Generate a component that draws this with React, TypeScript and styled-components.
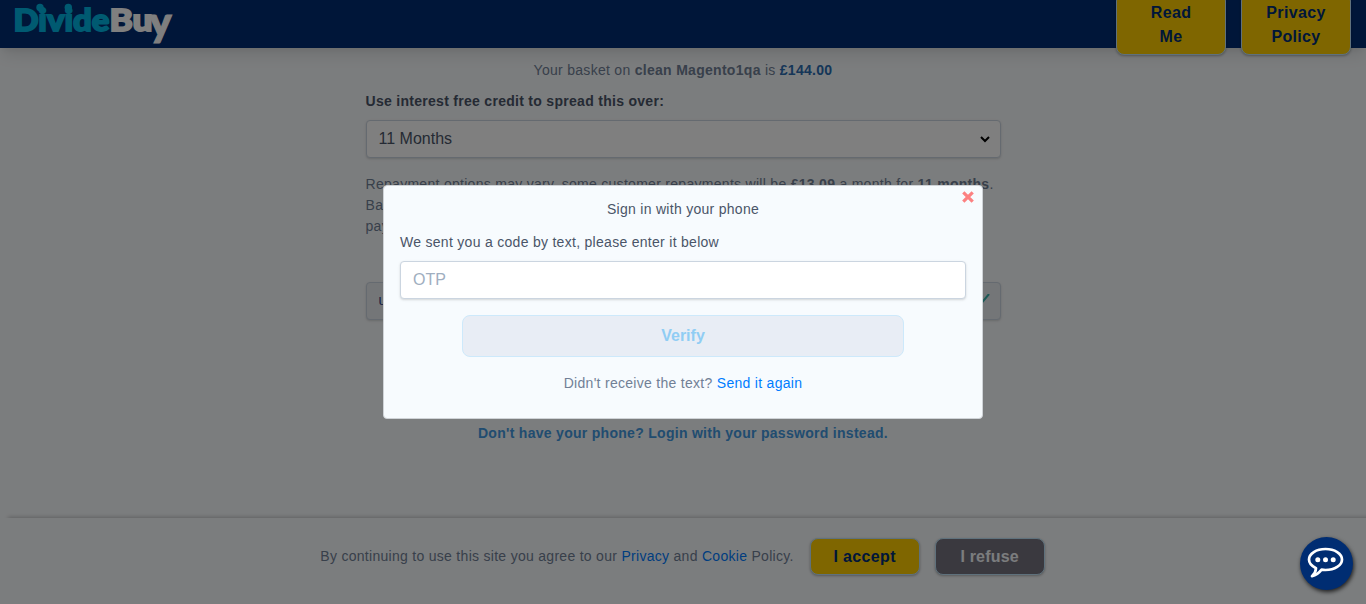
import React from "react";
import styled, { createGlobalStyle } from "styled-components";

const GlobalStyle = createGlobalStyle`
  *, *::before, *::after { box-sizing: border-box; }
  html, body { margin: 0; height: 100%; overflow: hidden; }
  body {
    background: #f7fafc;
    color: #718096;
    font-family: "Liberation Sans", Arial, sans-serif;
    font-size: 14px;
    line-height: 21px;
    letter-spacing: 0.29px;
  }
  p { margin: 0; }
`;

const Page = styled.div`
  display: flex;
  flex-direction: column;
  height: 604px;
  overflow: hidden;
`;

const NavBar = styled.header`
  display: flex;
  flex: none;
  align-items: center;
  justify-content: space-between;
  height: 48px;
  padding: 0 15px;
  background: #002d72;
  box-shadow: 0 10px 15px -3px rgba(0, 0, 0, 0.1), 0 4px 6px -2px rgba(0, 0, 0, 0.05);
`;

const Logo = styled.svg`
  display: block;
  width: 160px;
  height: 48px;
  overflow: visible;
  letter-spacing: 0;
  font-family: Lato, sans-serif;
  font-weight: 900;
`;

const NavActions = styled.div`
  display: flex;
  gap: 15px;
`;

const Button = styled.button<{ $tone: "gold" | "slate"; $tall?: boolean }>`
  width: 110px;
  height: ${(p) => (p.$tall ? 62 : 37)}px;
  padding: ${(p) => (p.$tall ? "1px 20px 0" : "0 20px")};
  border: 1px solid #bee3f8;
  border-radius: 8px;
  background: ${(p) => (p.$tone === "gold" ? "#ffcd00" : "#75727f")};
  color: ${(p) => (p.$tone === "gold" ? "#002d72" : "#f7fafc")};
  font: bold 16px/24px "Liberation Sans", Arial, sans-serif;
  letter-spacing: ${(p) => (p.$tone === "gold" ? 0.35 : 0.2)}px;
  box-shadow: 0 1px 3px rgba(0, 0, 0, 0.2), 0 1px 2px rgba(0, 0, 0, 0.1);
`;

const Content = styled.main`
  display: flex;
  flex: 1;
  flex-direction: column;
  width: 635px;
  margin: 0 auto;
  padding-top: 12px;
`;

const Basket = styled.p`
  text-align: center;
`;

const Strong = styled.strong<{ $color?: string }>`
  color: ${(p) => p.$color ?? "inherit"};
`;

const Label = styled.label`
  margin-top: 10px;
  color: #4a5568;
  font-weight: bold;
`;

const Field = styled.div<{ $muted?: boolean }>`
  display: flex;
  align-items: center;
  justify-content: space-between;
  height: 38px;
  padding: 0 10px 1px 12px;
  border: 1px solid #cbd5e0;
  border-radius: 4px;
  background: ${(p) => (p.$muted ? "#e8ecf1" : "#fff")};
  color: ${(p) => (p.$muted ? "#2a4386" : "#4a5568")};
  font-size: ${(p) => (p.$muted ? 14 : 16)}px;
  letter-spacing: 0;
  box-shadow: 0 1px 3px rgba(0, 0, 0, 0.1), 0 1px 2px rgba(0, 0, 0, 0.06);
`;

const SelectField = styled(Field)`
  margin-top: 8px;
`;

const Terms = styled.p`
  height: 63px;
  margin-top: 16px;
  white-space: nowrap;
`;

const UserField = styled(Field)`
  margin-top: 45px;
`;

const LoginLink = styled.a`
  margin-top: 103px;
  color: #4299e1;
  font-weight: bold;
  text-align: center;
`;

const CookieBar = styled.footer`
  display: flex;
  flex: none;
  align-items: center;
  justify-content: center;
  height: 86px;
  padding: 0 1px 9px 0;
  background: #f7fafc;
  box-shadow: 8px -1px 4px rgba(0, 0, 0, 0.22);
`;

const CookieText = styled.p`
  margin-right: 16px;
`;

const CookieButtons = styled.div`
  display: flex;
  gap: 15px;
`;

const Link = styled.a`
  color: #007bff;
`;

const Backdrop = styled.div`
  position: fixed;
  inset: 0;
  display: flex;
  align-items: center;
  justify-content: center;
  background: rgba(0, 0, 0, 0.5);
`;

const Dialog = styled.section`
  position: relative;
  display: flex;
  flex-direction: column;
  width: 600px;
  height: 234px;
  padding: 13px 16px;
  border: 1px solid #cfd3d7;
  border-radius: 4px;
  background: #f7fbfe;
  color: #4a5568;
`;

const Close = styled.svg`
  position: absolute;
  top: 5px;
  right: 8px;
  width: 12px;
  height: 12px;
`;

const Title = styled.p`
  text-align: center;
`;

const Prompt = styled.p`
  margin-top: 12px;
`;

const OtpInput = styled.input`
  height: 38px;
  margin-top: 8px;
  padding: 0 12px;
  border: 1px solid #cbd5e0;
  border-radius: 4px;
  background: #fff;
  font: 16px "Liberation Sans", Arial, sans-serif;
  box-shadow: 0 1px 3px rgba(0, 0, 0, 0.1), 0 1px 2px rgba(0, 0, 0, 0.06);
  &::placeholder { color: #a0aec0; opacity: 1; }
`;

const Verify = styled.button`
  align-self: center;
  width: 442px;
  height: 42px;
  margin-top: 16px;
  border: 1px solid #cde9fb;
  border-radius: 8px;
  background: #e8edf5;
  color: #90cdf4;
  font: bold 16px "Liberation Sans", Arial, sans-serif;
`;

const Resend = styled.p`
  margin-top: 16px;
  color: #718096;
  text-align: center;
`;

const Chat = styled.button`
  position: fixed;
  right: 13px;
  bottom: 14px;
  display: flex;
  align-items: center;
  justify-content: center;
  width: 53px;
  height: 53px;
  padding: 0 2px 2px 0;
  border: 0;
  border-radius: 50%;
  background: #002d72;
  box-shadow: 1px 2px 4px rgba(0, 0, 0, 0.75);
`;

export default function App() {
  return (
    <>
      <GlobalStyle />
      <Page>
        <NavBar>
          <Logo viewBox="0 0 160 48" aria-label="DivideBuy">
            <text x="-1.500" y="31" fontSize="31" fill="#00b5e2" stroke="#00b5e2" strokeWidth="1.800" textLength="96" lengthAdjust="spacingAndGlyphs">Divide</text>
            <circle cx="25" cy="7.500" r="3.700" fill="#00b5e2" />
            <circle cx="53.300" cy="7.500" r="3.700" fill="#00b5e2" />
            <text x="94.500" y="31" fontSize="31" fill="#fff" stroke="#fff" strokeWidth="1.800" textLength="43" lengthAdjust="spacingAndGlyphs">Bu</text>
            <text x="134.500" y="35.500" fontSize="40" fill="#fff" stroke="#fff" strokeWidth="1.200" textLength="22" lengthAdjust="spacingAndGlyphs">y</text>
          </Logo>
          <NavActions>
            <Button $tone="gold" $tall>Read Me</Button>
            <Button $tone="gold" $tall>Privacy Policy</Button>
          </NavActions>
        </NavBar>
        <Content>
          <Basket>
            Your basket on <Strong>clean Magento1qa</Strong> is <Strong $color="#2b6cb0">£144.00</Strong>
          </Basket>
          <Label>Use interest free credit to spread this over:</Label>
          <SelectField>
            11 Months
            <svg width="10" height="8" viewBox="0 0 10 8" fill="none" stroke="#000" strokeWidth="2">
              <path d="M1 2 5 6 9 2" />
            </svg>
          </SelectField>
          <Terms>
            Repayment options may vary, some customer repayments will be <Strong>£13.09</Strong> a month for{" "}
            <Strong>11 months</Strong>.
            <br />
            Based
            <br />
            payments
          </Terms>
          <UserField $muted>
            user
            <svg width="15" height="14" viewBox="0 0 15 14" fill="none" stroke="#38b2ac" strokeWidth="2">
              <path d="M1 6 5 11 14 0" />
            </svg>
          </UserField>
          <LoginLink>Don't have your phone? Login with your password instead.</LoginLink>
        </Content>
        <CookieBar>
          <CookieText>
            By continuing to use this site you agree to our <Link>Privacy</Link> and <Link>Cookie</Link> Policy.
          </CookieText>
          <CookieButtons>
            <Button $tone="gold">I accept</Button>
            <Button $tone="slate">I refuse</Button>
          </CookieButtons>
        </CookieBar>
      </Page>
      <Backdrop>
        <Dialog>
          <Close viewBox="0 0 12 12" stroke="#fc8181" strokeWidth="3.200">
            <path d="M1.300 1.300 10.700 10.700M10.700 1.300 1.300 10.700" />
          </Close>
          <Title>Sign in with your phone</Title>
          <Prompt>We sent you a code by text, please enter it below</Prompt>
          <OtpInput placeholder="OTP" />
          <Verify>Verify</Verify>
          <Resend>
            Didn't receive the text? <Link>Send it again</Link>
          </Resend>
        </Dialog>
      </Backdrop>
      <Chat aria-label="Chat">
        <svg width="37" height="32" viewBox="0 0 37 32" fill="none">
          <path d="M9 21.200C4.500 19 2 16 2 12.500 2 6.700 9.300 2 18.500 2S35 6.700 35 12.500 27.700 23 18.500 23Q16.600 23 14.600 22.700 10.500 28 5 29.200 8.800 25.500 9 21.200Z" stroke="#fff" strokeWidth="2.700" strokeLinejoin="round" />
          <circle cx="10.800" cy="12.700" r="2.500" fill="#fff" />
          <circle cx="18.500" cy="12.700" r="2.500" fill="#fff" />
          <circle cx="26.200" cy="12.700" r="2.500" fill="#fff" />
        </svg>
      </Chat>
    </>
  );
}
